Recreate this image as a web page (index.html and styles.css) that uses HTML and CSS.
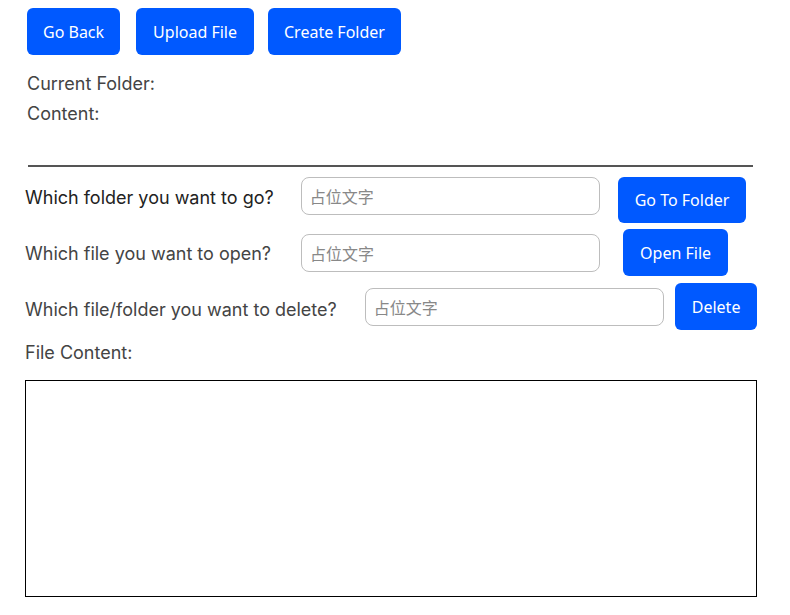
FILE: index.html
```html
<!DOCTYPE html>
<html>
<head>
<meta charset="utf-8">
<link rel="stylesheet" href="styles.css">
</head>
<body>
<div class="page">
  <div class="toolbar">
    <button class="btn btn-back">Go Back</button>
    <button class="btn btn-upload">Upload File</button>
    <button class="btn btn-create">Create Folder</button>
  </div>
  <div class="info">
    <div class="info-line">Current Folder:</div>
    <div class="info-line">Content:</div>
  </div>
  <div class="divider"></div>
  <div class="row row-go">
    <span class="label label-dark">Which folder you want to go?</span>
    <input class="field" type="text" placeholder="占位文字">
    <button class="btn btn-go">Go To Folder</button>
  </div>
  <div class="row row-open">
    <span class="label">Which file you want to open?</span>
    <input class="field" type="text" placeholder="占位文字">
    <button class="btn btn-open">Open File</button>
  </div>
  <div class="row row-del">
    <span class="label">Which file/folder you want to delete?</span>
    <input class="field" type="text" placeholder="占位文字">
    <button class="btn btn-del">Delete</button>
  </div>
  <div class="file-label">File Content:</div>
  <div class="file-box"></div>
</div>
</body>
</html>
```
FILE: styles.css
```css
* { box-sizing: border-box; }
html, body { margin: 0; padding: 0; background: #fff; }
body { font-family: Inter, "Noto Sans", sans-serif; color: #444; }
.page { width: 790px; height: 615px; overflow: hidden; padding-top: 8px; }

.btn {
  background: #0059ff;
  color: #fff;
  border: none;
  border-radius: 6px;
  font-family: "Noto Sans", "Open Sans", sans-serif;
  font-size: 16px;
  height: 47px;
  padding: 0 17px;
  cursor: pointer;
}

.toolbar { display: flex; padding-left: 27px; }
.btn-back { padding: 0 16px; }
.btn-upload { margin-left: 16px; }
.btn-create { margin-left: 14px; padding: 0 16px; }

.info { padding-left: 27px; margin-top: 14px; }
.info-line { font-size: 18px; line-height: 30px; color: #444; }

.divider { margin: 36px 0 0 28px; width: 725px; height: 2px; background: #555; }

.row { display: flex; padding-left: 25px; }
.label { font-size: 18px; line-height: 38px; white-space: nowrap; color: #444; }
.label-dark { color: #222; }
.field {
  width: 299px;
  height: 38px;
  border: 1px solid #bdbdbd;
  border-radius: 8px;
  padding: 0 8px;
  font-family: "Noto Sans CJK SC", sans-serif;
  font-size: 16px;
  color: #333;
  outline: none;
}
.field::placeholder { color: #888; }

.row-go { margin-top: 10px; align-items: flex-start; }
.row-go .label { margin-top: 2px; }
.row-go .field { margin-left: 27px; }
.btn-go { margin-left: 18px; height: 46px; }

.row-open { margin-top: 6px; align-items: center; }
.row-open .label { margin-top: 2px; }
.row-open .field { margin-left: 30px; }
.btn-open { margin-left: 23px; }

.row-del { margin-top: 7px; align-items: center; }
.row-del .label { margin-top: 6px; }
.row-del .field { margin-left: 28px; }
.btn-del { margin-left: 11px; }

.file-label { padding-left: 25px; font-size: 18px; line-height: 30px; margin-top: 8px; color: #444; }
.file-box { margin: 12px 0 0 25px; width: 732px; height: 217px; border: 1px solid #000; }
```
